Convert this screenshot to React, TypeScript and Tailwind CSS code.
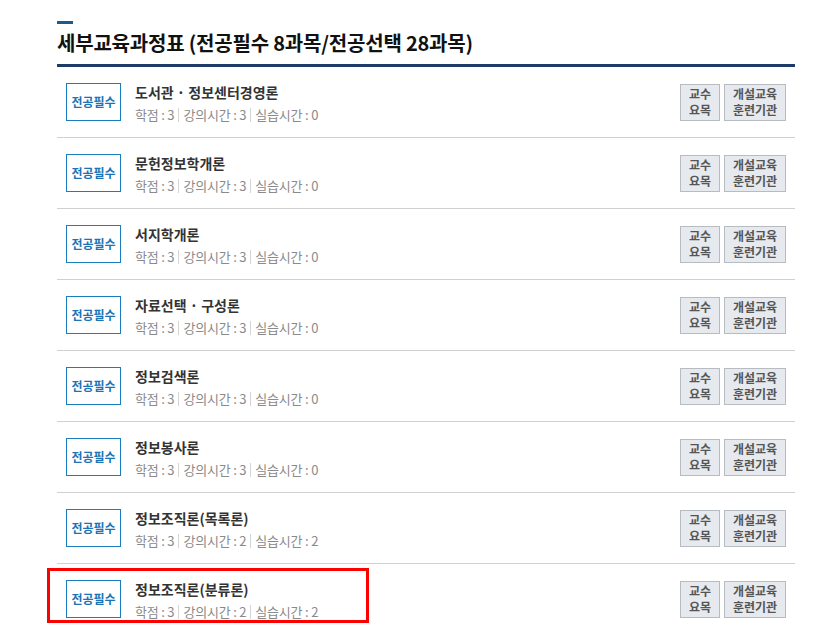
const courses = [
  { name: "도서관 · 정보센터경영론", credit: 3, lecture: 3, practice: 0 },
  { name: "문헌정보학개론", credit: 3, lecture: 3, practice: 0 },
  { name: "서지학개론", credit: 3, lecture: 3, practice: 0 },
  { name: "자료선택 · 구성론", credit: 3, lecture: 3, practice: 0 },
  { name: "정보검색론", credit: 3, lecture: 3, practice: 0 },
  { name: "정보봉사론", credit: 3, lecture: 3, practice: 0 },
  { name: "정보조직론(목록론)", credit: 3, lecture: 2, practice: 2 },
  { name: "정보조직론(분류론)", credit: 3, lecture: 2, practice: 2, highlight: true },
];

function Divider() {
  return <span className="mx-[4px] inline-block h-[14px] w-px bg-[#d4d4d4] align-[-2px]"></span>;
}

export default function App() {
  return (
    <div
      className="min-h-[630px] bg-white pt-[21px]"
      style={{ fontFamily: '"Noto Sans CJK KR", "Noto Sans", sans-serif' }}
    >
      <div className="ml-[57px] w-[738px]">
        <div className="h-[3px] w-4 bg-[#1d5a8a]"></div>
        <h2 className="mt-[5px] border-b-[3px] border-[#1d3b66] pb-[7px] text-[20px] font-bold leading-[28px] tracking-[-0.2px] text-[#111]">
          세부교육과정표 (전공필수 8과목/전공선택 28과목)
        </h2>

        {courses.map((c, i) => (
          <div key={i} className="relative flex h-[71px] items-center border-b border-[#d0d0d0] pl-[9px] pr-[9px]">
            <div className="flex h-[38px] w-[55px] items-center justify-center border border-[#1b7dc0] text-[12px] font-bold text-[#1a74b5]">
              전공필수
            </div>
            <div className="ml-[14px] pt-[2px]">
              <p className="text-[14px] font-bold leading-[20px] text-[#333]">{c.name}</p>
              <p className="mt-[3px] text-[13px] leading-[20px] tracking-[-0.2px] text-[#8a8a8a]">
                학점 : {c.credit}
                <Divider />
                강의시간 : {c.lecture}
                <Divider />
                실습시간 : {c.practice}
              </p>
            </div>
            <div className="ml-auto flex gap-[4px]">
              <button className="h-[37px] w-[40px] border border-[#b7bbc2] bg-[#e6e9ee] text-[12px] font-bold leading-[16px] text-[#555]">
                교수
                <br />
                요목
              </button>
              <button className="h-[37px] w-[62px] border border-[#b7bbc2] bg-[#e6e9ee] text-[12px] font-bold leading-[16px] text-[#555]">
                개설교육
                <br />
                훈련기관
              </button>
            </div>
            {c.highlight && (
              <div className="pointer-events-none absolute -left-[10px] top-[4px] h-[55px] w-[322px] border-[3px] border-[#f00]"></div>
            )}
          </div>
        ))}
      </div>
    </div>
  );
}
